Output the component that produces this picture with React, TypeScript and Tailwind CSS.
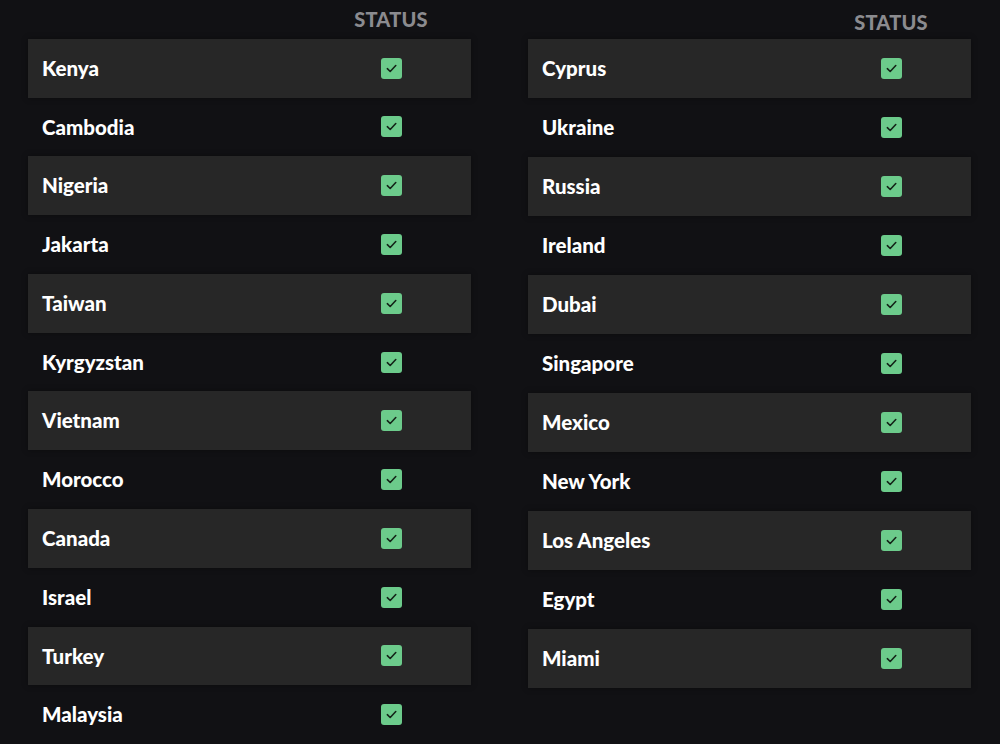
const left = ["Kenya", "Cambodia", "Nigeria", "Jakarta", "Taiwan", "Kyrgyzstan", "Vietnam", "Morocco", "Canada", "Israel", "Turkey", "Malaysia"];
const right = ["Cyprus", "Ukraine", "Russia", "Ireland", "Dubai", "Singapore", "Mexico", "New York", "Los Angeles", "Egypt", "Miami"];

const Check = () => (
  <div className="w-[21px] h-[21px] rounded-[3px] bg-[#6ccb8b] flex items-center justify-center">
    <svg width="13" height="13" viewBox="0 0 14 14" fill="none">
      <path d="M2.5 7.2 L5.6 10.2 L11.6 3.8" stroke="#142318" strokeWidth="1.7" strokeLinecap="round" strokeLinejoin="round" />
    </svg>
  </div>
);

const Table = ({ rows, headerPad }: { rows: string[]; headerPad: string }) => (
  <div className="w-[443px] flex flex-col">
    <div className={`h-[39px] flex items-center justify-end ${headerPad}`}>
      <div className="w-[160px] text-center text-[20px] font-black text-[#8b8b8f] tracking-[0.2px]">STATUS</div>
    </div>
    {rows.map((name, i) => (
      <div
        key={name}
        className={`h-[59px] flex items-center ${i % 2 === 0 ? "bg-[#272727] shadow-[0_0_6px_rgba(0,0,0,0.35)]" : ""}`}
      >
        <div className="flex-1 pl-[14px] text-[20.5px] font-black text-white">{name}</div>
        <div className="w-[160px] flex justify-center">
          <Check />
        </div>
      </div>
    ))}
  </div>
);

export default function App() {
  return (
    <div
      className="w-[1000px] h-[744px] overflow-hidden bg-[#111114] flex gap-[57px] pl-[28px]"
      style={{ fontFamily: "Lato, 'Open Sans', sans-serif" }}
    >
      <Table rows={left} headerPad="pt-0" />
      <Table rows={right} headerPad="pt-[5px]" />
    </div>
  );
}
